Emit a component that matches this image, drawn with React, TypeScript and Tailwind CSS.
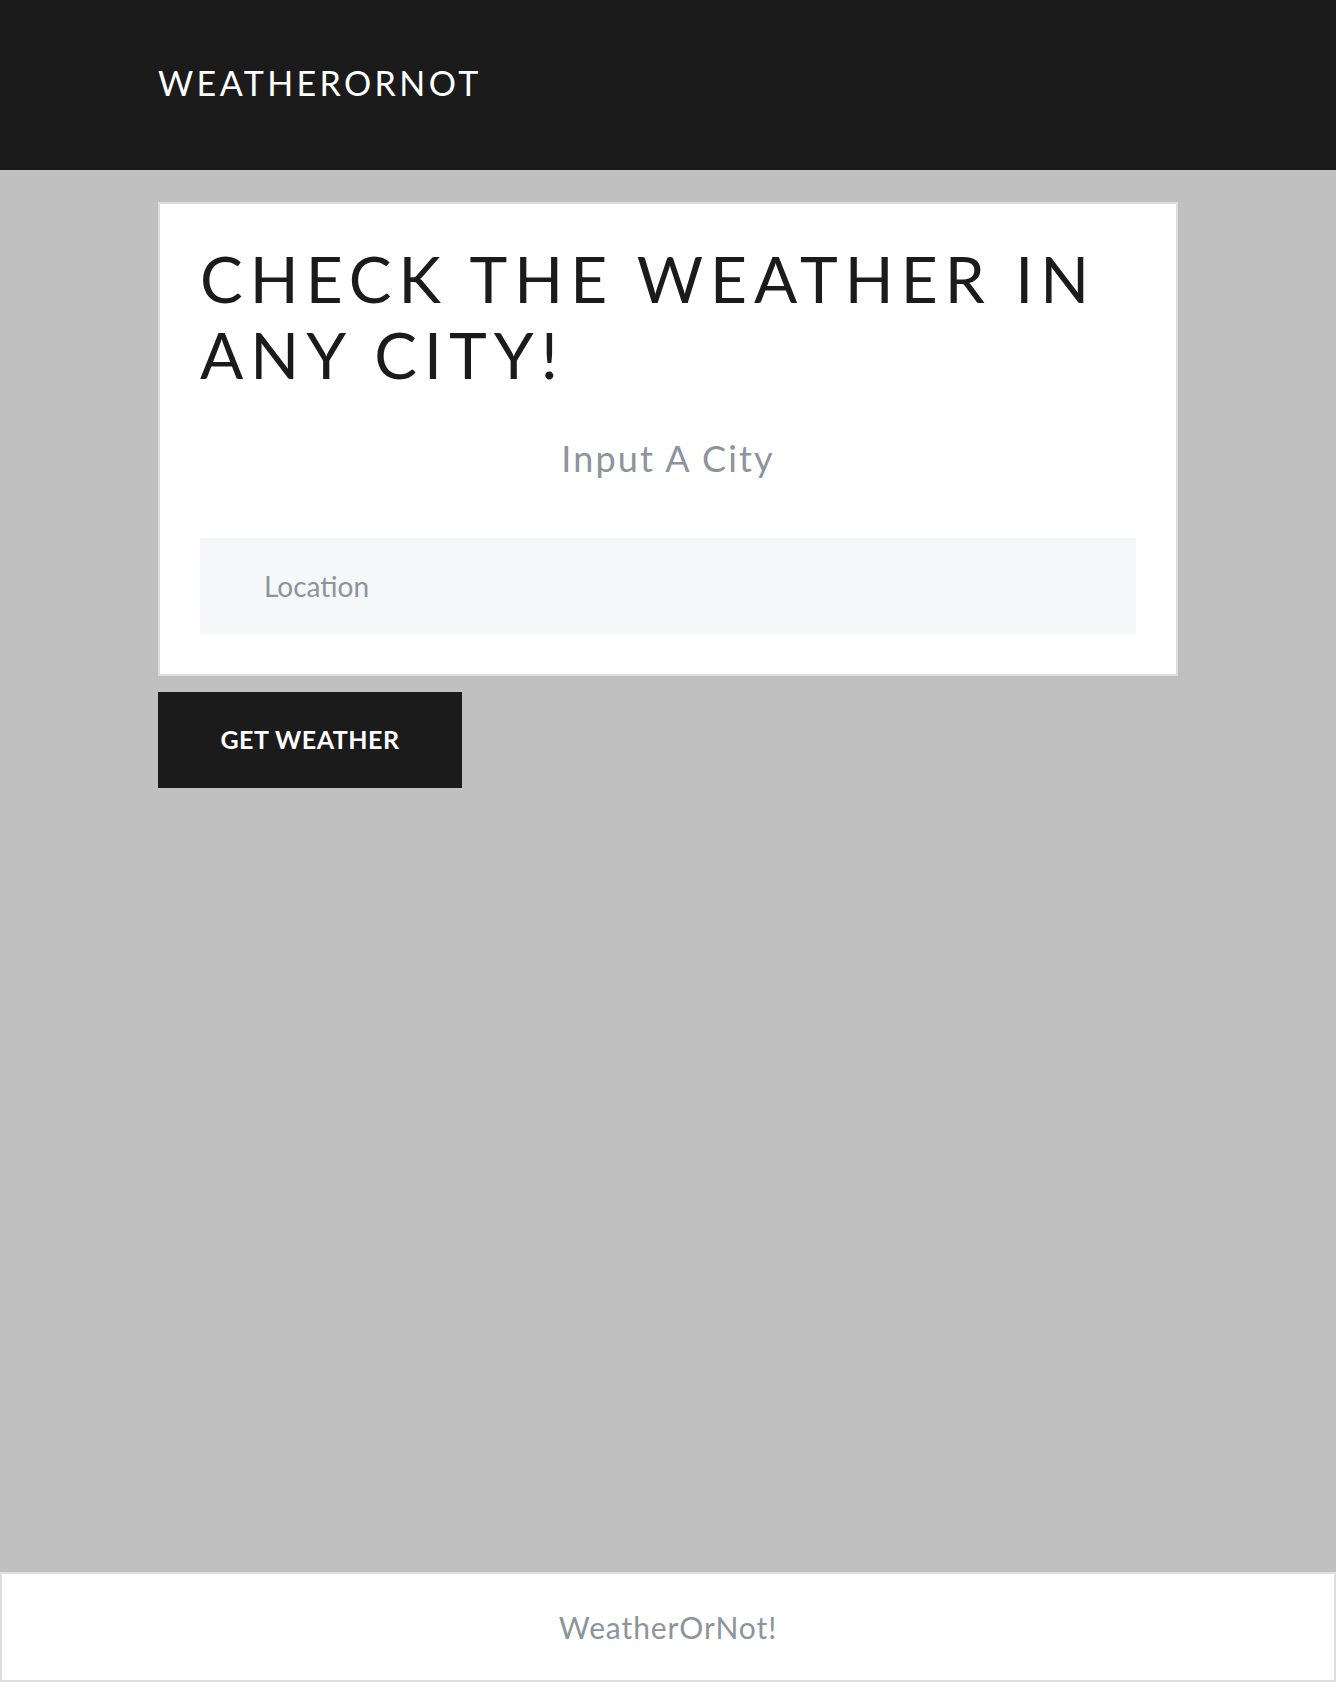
import { Fragment } from "react";

const font = { fontFamily: "Lato, 'Noto Sans', sans-serif" };

const Header = () => (
    <header className="h-[170px] bg-[#1b1b1b] flex items-center">
        <div className="w-[1020px] mx-auto pb-[4px]">
            <h1 className="text-[34px] leading-none text-white tracking-[0.1em] font-normal">
                WEATHERORNOT
            </h1>
        </div>
    </header>
);

const SearchCard = () => (
    <div className="border-2 border-[#dedede] bg-white px-10 pt-[37px] pb-10">
        <h2 className="text-[64px] leading-[76px] text-[#1b1b1b] tracking-[0.11em] font-normal">
            CHECK THE WEATHER IN ANY CITY!
        </h2>
        <p className="mt-[44px] text-center text-[36px] leading-[43px] text-[#8c949c] tracking-[0.06em]">
            Input A City
        </p>
        <input
            type="text"
            placeholder="Location"
            className="mt-[58px] block w-full h-[96px] bg-[#f6f7f9] px-16 text-[28px] text-[#333] placeholder:text-[#8c949c] outline-none"
        />
    </div>
);

export default function App() {
    return (
        <Fragment>
            <div className="min-h-screen flex flex-col bg-[#c0c0c0]" style={font}>
                <Header />
                <main className="flex-1 pt-8">
                    <div className="w-[1020px] mx-auto">
                        <SearchCard />
                        <button className="mt-4 h-[96px] w-[304px] bg-[#1b1b1b] text-white text-[25px] font-bold tracking-[0.02em]">
                            GET WEATHER
                        </button>
                    </div>
                </main>
                <footer className="h-[110px] border-2 border-[#dedede] bg-white flex items-center justify-center">
                    <p className="text-[30px] text-[#8c949c] tracking-[0.03em]">
                        WeatherOrNot!
                    </p>
                </footer>
            </div>
        </Fragment>
    );
}
